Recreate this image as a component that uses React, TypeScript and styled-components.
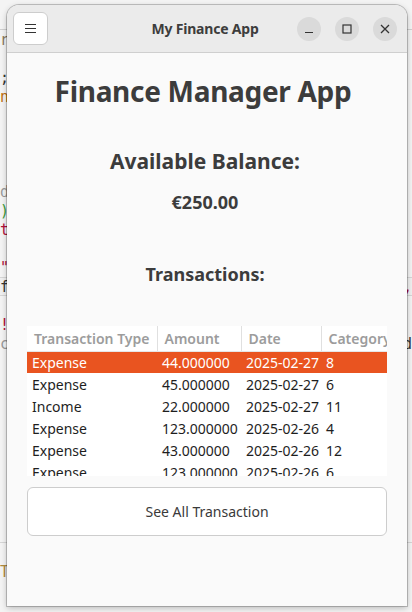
import React from "react";
import styled, { createGlobalStyle } from "styled-components";

const Global = createGlobalStyle`
  html, body { margin: 0; padding: 0; }
  body {
    width: 412px;
    height: 612px;
    overflow: hidden;
    background: #f4f4f4;
    font-family: "Noto Sans", "Open Sans", sans-serif;
  }
`;

const Desktop = styled.div`
  position: relative;
  width: 412px;
  height: 612px;
  overflow: hidden;
  background: #f4f4f4;
`;

const Editor = styled.div`
  display: flex;
  flex-direction: column;
`;

const EditorLine = styled.div<{ $boxed?: boolean; $bottom?: boolean }>`
  height: 19px;
  display: flex;
  justify-content: space-between;
  align-items: center;
  font-family: "DejaVu Sans Mono", monospace;
  font-size: 15px;
  box-sizing: border-box;
  border-top: ${(p) => (p.$boxed ? "1px solid #d6d6d6" : "none")};
  border-bottom: ${(p) => (p.$boxed || p.$bottom ? "1px solid #d6d6d6" : "none")};
  background: ${(p) => (p.$boxed ? "#f0f0f0" : "transparent")};
`;

const Glyph = styled.span<{ $color: string }>`
  color: ${(p) => p.$color};
`;

const TopRule = styled.div`
  height: 1px;
  width: 100%;
  background: #d0d0d0;
  margin-top: 29px;
`;

const Window = styled.div`
  position: absolute;
  left: 7px;
  top: 5px;
  width: 400px;
  height: 601px;
  display: flex;
  flex-direction: column;
  background: #fafafa;
  border-radius: 12px 12px 0 0;
  box-shadow: 0 0 0 1px rgba(0, 0, 0, 0.2), 0 2px 6px rgba(0, 0, 0, 0.25);
  overflow: hidden;
`;

const TitleBar = styled.header`
  height: 47px;
  flex: none;
  display: grid;
  grid-template-columns: 1fr auto 1fr;
  align-items: center;
  padding: 0 10px 0 6px;
  background: #ebebeb;
  border-bottom: 1px solid #cfcfcf;
`;

const MenuButton = styled.button`
  justify-self: start;
  width: 35px;
  height: 33px;
  padding: 0;
  display: flex;
  flex-direction: column;
  align-items: center;
  justify-content: center;
  gap: 3px;
  background: #ffffff;
  border: 1px solid #cdcdcd;
  border-radius: 6px;
`;

const Bar = styled.span`
  width: 11px;
  height: 1.2px;
  background: #333;
`;

const Title = styled.div`
  font-weight: 700;
  font-size: 14px;
  letter-spacing: -0.2px;
  color: #3d3d3d;
`;

const Controls = styled.div`
  justify-self: end;
  display: flex;
  gap: 14px;
`;

const CtlButton = styled.button`
  width: 24px;
  height: 24px;
  border-radius: 50%;
  border: none;
  padding: 0;
  background: #dadada;
  display: flex;
  align-items: center;
  justify-content: center;
`;

const Content = styled.main`
  flex: 1;
  display: flex;
  flex-direction: column;
  align-items: center;
  padding: 20px 20px 0;
`;

const H1 = styled.h1`
  margin: 0 8px 0 0;
  font-size: 28px;
  letter-spacing: -0.3px;
  line-height: 36px;
  font-weight: 700;
  color: #3c3c3c;
`;

const Heading = styled.h2<{ $size: number; $mt: number }>`
  margin: ${(p) => p.$mt}px 4px 0 0;
  font-size: ${(p) => p.$size}px;
  line-height: ${(p) => Math.round(p.$size * 1.2)}px;
  font-weight: 700;
  color: #3c3c3c;
`;

const TableWrap = styled.div`
  margin-top: 41px;
  width: 360px;
  height: 150px;
  overflow: hidden;
  background: #ffffff;
  align-self: flex-start;
`;

const Table = styled.table`
  border-collapse: collapse;
  table-layout: fixed;
  width: 400px;
  font-size: 14px;
`;

const Th = styled.th<{ $w: number }>`
  box-sizing: border-box;
  width: ${(p) => p.$w}px;
  height: 25px;
  padding: 0 0 0 7px;
  text-align: left;
  font-weight: 600;
  color: #9c9c9c;
  border-bottom: 1px solid #e6e6e6;
  border-left: 1px solid #e0e0e0;
  white-space: nowrap;
  overflow: hidden;
  &:first-child { border-left: none; }
`;

const Tr = styled.tr<{ $selected?: boolean }>`
  background: ${(p) => (p.$selected ? "#e95420" : "transparent")};
  color: ${(p) => (p.$selected ? "#ffffff" : "#1e1e1e")};
`;

const Td = styled.td`
  box-sizing: border-box;
  height: 22px;
  padding: 0 0 0 5px;
  white-space: nowrap;
  overflow: hidden;
`;

const SeeAll = styled.button`
  margin-top: 11px;
  width: 360px;
  height: 49px;
  background: #ffffff;
  border: 1px solid #cdcdcd;
  border-radius: 6px;
  font-family: inherit;
  font-size: 14px;
  color: #3a3a3a;
  align-self: flex-start;
`;

const rows = [
  ["Expense", "44.000000", "2025-02-27", "8"],
  ["Expense", "45.000000", "2025-02-27", "6"],
  ["Income", "22.000000", "2025-02-27", "11"],
  ["Expense", "123.000000", "2025-02-26", "4"],
  ["Expense", "43.000000", "2025-02-26", "12"],
  ["Expense", "123.000000", "2025-02-26", "6"],
  ["Income", "50.000000", "2025-02-25", "3"],
];

type Line = { l?: [string, string]; r?: [string, string]; boxed?: boolean; bottom?: boolean };
const editorLines: Line[] = Array.from({ length: 30 }, () => ({}));
editorLines[0] = { l: ["r", "#8a7a60"] };
editorLines[2] = { l: [";", "#333"] };
editorLines[3] = { l: ["n", "#c07010"] };
editorLines[8] = { l: ["d", "#9a9a9a"] };
editorLines[9] = { l: [")", "#3a9a3a"] };
editorLines[10] = { l: ["t", "#b0103a"] };
editorLines[12] = { l: ['"', "#b0103a"] };
editorLines[13] = { l: ["f", "#333"], r: ["o,", "#b0103a"], boxed: true };
editorLines[15] = { l: ["!", "#b0103a"] };
editorLines[16] = { l: ["c", "#9a9a9a"], r: ["d", "#333"] };
editorLines[26] = { bottom: true };
editorLines[28] = { l: ["T", "#b08a40"] };

export default function App() {
  return (
    <>
      <Global />
      <Desktop>
        <TopRule />
        <Editor>
          {editorLines.map((ln, i) => (
            <EditorLine key={i} $boxed={ln.boxed} $bottom={ln.bottom}>
              <Glyph $color={ln.l ? ln.l[1] : "#333"}>{ln.l ? ln.l[0] : ""}</Glyph>
              <Glyph $color={ln.r ? ln.r[1] : "#333"}>{ln.r ? ln.r[0] : ""}</Glyph>
            </EditorLine>
          ))}
        </Editor>
        <Window>
          <TitleBar>
            <MenuButton aria-label="Menu">
              <Bar />
              <Bar />
              <Bar />
            </MenuButton>
            <Title>My Finance App</Title>
            <Controls>
              <CtlButton aria-label="Minimize">
                <svg width="10" height="10" viewBox="0 0 10 10">
                  <path d="M1 8.5h8" stroke="#333" strokeWidth="1.2" />
                </svg>
              </CtlButton>
              <CtlButton aria-label="Maximize">
                <svg width="10" height="10" viewBox="0 0 10 10">
                  <rect x="1" y="1" width="8" height="8" fill="none" stroke="#333" strokeWidth="1.2" />
                </svg>
              </CtlButton>
              <CtlButton aria-label="Close">
                <svg width="10" height="10" viewBox="0 0 10 10">
                  <path d="M1 1l8 8M9 1l-8 8" stroke="#333" strokeWidth="1.3" />
                </svg>
              </CtlButton>
            </Controls>
          </TitleBar>
          <Content>
            <H1>Finance Manager App</H1>
            <Heading $size={21} $mt={40}>Available Balance:</Heading>
            <Heading $size={18} $mt={17}>€250.00</Heading>
            <Heading $size={18} $mt={50}>Transactions:</Heading>
            <TableWrap>
              <Table>
                <thead>
                  <tr>
                    <Th $w={130}>Transaction Type</Th>
                    <Th $w={84}>Amount</Th>
                    <Th $w={80}>Date</Th>
                    <Th $w={106}>Category</Th>
                  </tr>
                </thead>
                <tbody>
                  {rows.map((r, i) => (
                    <Tr key={i} $selected={i === 0}>
                      {r.map((c, j) => (
                        <Td key={j}>{c}</Td>
                      ))}
                    </Tr>
                  ))}
                </tbody>
              </Table>
            </TableWrap>
            <SeeAll>See All Transaction</SeeAll>
          </Content>
        </Window>
      </Desktop>
    </>
  );
}
